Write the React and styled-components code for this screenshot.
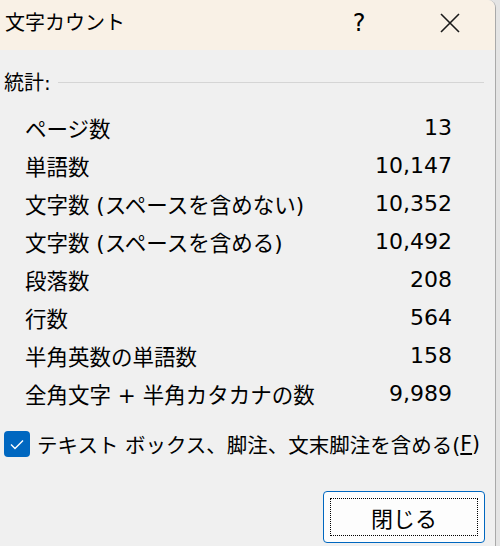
import React from "react";
import styled, { createGlobalStyle } from "styled-components";

const GlobalStyle = createGlobalStyle`
  html, body { margin: 0; padding: 0; background: #e4e4e4; }
  body { font-family: "DejaVu Sans", "Noto Sans CJK JP", sans-serif; color: #000; }
`;

const Window = styled.div`
  width: 496px;
  height: 546px;
  box-sizing: border-box;
  background: #f0f0f0;
  border-right: 1px solid #a9a9a9;
  border-top-right-radius: 8px;
  overflow: hidden;
  display: flex;
  flex-direction: column;
`;

const TitleBar = styled.div`
  height: 50px;
  flex: none;
  background: #f9f1e6;
  display: flex;
  align-items: center;
  padding-right: 22px;
`;

const Title = styled.div`
  flex: 1;
  padding-left: 5px;
  font-size: 20px;
  line-height: 1;
  margin-top: -4px;
`;

const Caption = styled.div`
  width: 46px;
  height: 46px;
  display: flex;
  align-items: center;
  justify-content: center;
  margin-left: ${(p) => p.$gap || 0}px;
  font-family: "DejaVu Sans", sans-serif;
  font-size: 24px;
  margin-top: -4px;
`;

const Body = styled.div`
  flex: 1;
  display: flex;
  flex-direction: column;
  padding: 0 13px 0 4px;
`;

const SectionHead = styled.div`
  display: flex;
  align-items: center;
  height: 26px;
  margin-top: 18px;
  font-size: 20px;
`;

const SectionLine = styled.div`
  flex: 1;
  height: 1px;
  background: #d5d5d5;
  margin-left: 7px;
  margin-top: 2px;
  margin-right: -2px;
`;

const Stats = styled.div`
  display: grid;
  grid-template-columns: 1fr auto;
  padding: 14px 30px 0 21px;
  grid-auto-rows: 38px;
  align-items: center;
  font-size: 21.5px;
`;

const Label = styled.div`
  white-space: nowrap;
`;

const Value = styled.div`
  text-align: right;
  font-size: 22px;
`;

const CheckRow = styled.label`
  display: flex;
  align-items: center;
  margin-top: 19px;
  height: 26px;
  font-size: 20.5px;
  white-space: nowrap;
`;

const Box = styled.span`
  width: 26px;
  height: 26px;
  border-radius: 4px;
  background: #0067c0;
  display: flex;
  align-items: center;
  justify-content: center;
  margin-right: 7px;
  flex: none;
`;

const Under = styled.span`
  text-decoration: underline;
  text-underline-offset: 2px;
`;

const Footer = styled.div`
  display: flex;
  justify-content: flex-end;
  margin-top: 34px;
`;

const Button = styled.button`
  width: 162px;
  height: 52px;
  box-sizing: border-box;
  border: 1.5px solid #0067c0;
  border-radius: 4px;
  background: #fdfdfd;
  padding: 6px;
  font-family: inherit;
  margin-right: -3px;
  cursor: default;
`;

const Focus = styled.span`
  display: flex;
  align-items: center;
  justify-content: center;
  width: 100%;
  height: 100%;
  box-sizing: border-box;
  border: 1px dotted #000;
  font-size: 22px;
  color: #000;
`;

const stats = [
  ["ページ数", "13"],
  ["単語数", "10,147"],
  ["文字数 (スペースを含めない)", "10,352"],
  ["文字数 (スペースを含める)", "10,492"],
  ["段落数", "208"],
  ["行数", "564"],
  ["半角英数の単語数", "158"],
  ["全角文字 + 半角カタカナの数", "9,989"],
];

export default function App() {
  return (
    <>
      <GlobalStyle />
      <Window>
        <TitleBar>
          <Title>文字カウント</Title>
          <Caption>?</Caption>
          <Caption $gap={45}>
            <svg width="20" height="20" viewBox="0 0 20 20">
              <path d="M1 1 L19 19 M19 1 L1 19" stroke="#1a1a1a" strokeWidth="1.6" fill="none" />
            </svg>
          </Caption>
        </TitleBar>
        <Body>
          <SectionHead>
            統計:
            <SectionLine />
          </SectionHead>
          <Stats>
            {stats.map(([l, v]) => (
              <React.Fragment key={l}>
                <Label>{l}</Label>
                <Value>{v}</Value>
              </React.Fragment>
            ))}
          </Stats>
          <CheckRow>
            <Box>
              <svg width="14" height="11" viewBox="0 0 14 11">
                <path d="M1 5.5 L5 9.5 L13 1.5" stroke="#fff" strokeWidth="1.4" fill="none" />
              </svg>
            </Box>
            テキスト ボックス、脚注、文末脚注を含める(<Under>F</Under>)
          </CheckRow>
          <Footer>
            <Button>
              <Focus>閉じる</Focus>
            </Button>
          </Footer>
        </Body>
      </Window>
    </>
  );
}
